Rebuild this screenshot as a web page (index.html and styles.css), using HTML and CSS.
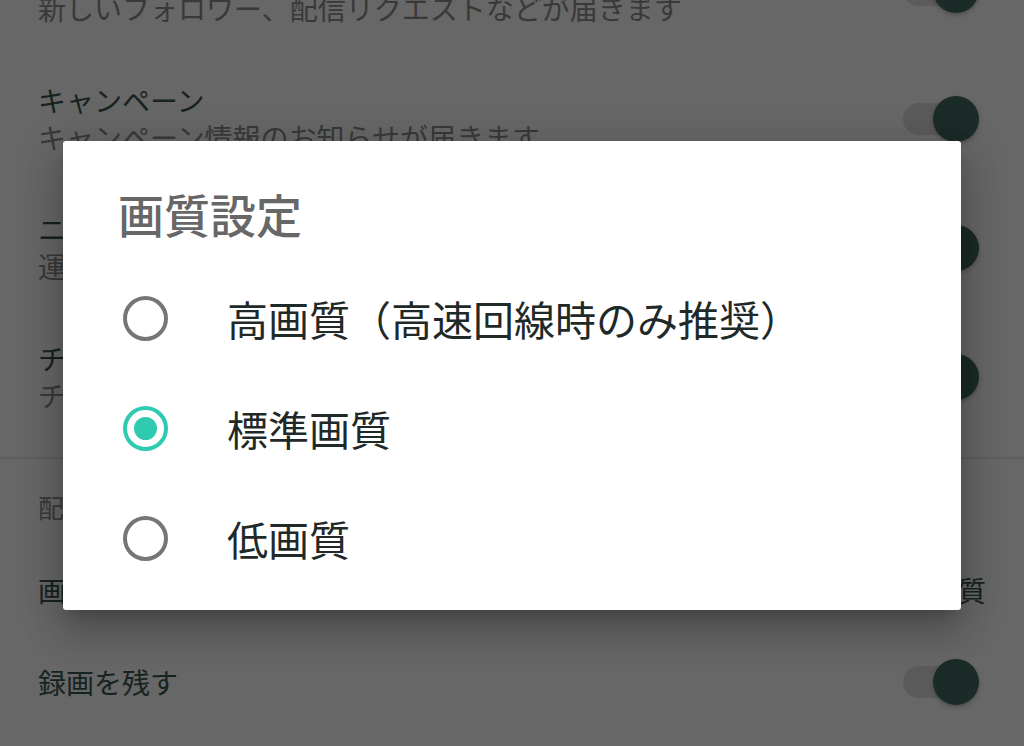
FILE: index.html
```html
<!DOCTYPE html>
<html lang="ja">
<head>
<meta charset="utf-8">
<title>画質設定</title>
<link rel="stylesheet" href="styles.css">
</head>
<body>
<div class="page">
  <div class="list">
    <div class="pref">
      <div class="pref-text">
        <div class="pref-title">フォロー通知</div>
        <div class="pref-sub">新しいフォロワー、配信リクエストなどが届きます</div>
      </div>
      <div class="switch"><span class="track"></span><span class="thumb"></span></div>
    </div>
    <div class="pref">
      <div class="pref-text">
        <div class="pref-title">キャンペーン</div>
        <div class="pref-sub">キャンペーン情報のお知らせが届きます</div>
      </div>
      <div class="switch"><span class="track"></span><span class="thumb"></span></div>
    </div>
    <div class="pref">
      <div class="pref-text">
        <div class="pref-title">ニュース</div>
        <div class="pref-sub">運営からのお知らせが届きます</div>
      </div>
      <div class="switch"><span class="track"></span><span class="thumb"></span></div>
    </div>
    <div class="pref">
      <div class="pref-text">
        <div class="pref-title">チャンネル</div>
        <div class="pref-sub">チャンネルの更新情報が届きます</div>
      </div>
      <div class="switch"><span class="track"></span><span class="thumb"></span></div>
    </div>
  </div>
  <div class="divider"></div>
  <div class="category">配信設定</div>
  <div class="pref pref-single">
    <div class="pref-title">画質</div>
    <div class="pref-value">標準画質</div>
  </div>
  <div class="pref pref-single">
    <div class="pref-title">録画を残す</div>
    <div class="switch"><span class="track"></span><span class="thumb"></span></div>
  </div>
</div>

<div class="scrim">
  <div class="dialog">
    <div class="dialog-title">画質設定</div>
    <div class="options">
      <div class="option">
        <span class="radio"></span>
        <span class="option-label">高画質（高速回線時のみ推奨）</span>
      </div>
      <div class="option">
        <span class="radio radio-checked"></span>
        <span class="option-label">標準画質</span>
      </div>
      <div class="option">
        <span class="radio"></span>
        <span class="option-label">低画質</span>
      </div>
    </div>
  </div>
</div>
</body>
</html>
```

FILE: styles.css
```css
* {
  box-sizing: border-box;
}

html, body {
  margin: 0;
  padding: 0;
  width: 1024px;
  height: 746px;
  overflow: hidden;
}

body {
  background: #666766;
  font-family: "Noto Sans CJK JP", "Noto Sans", sans-serif;
}

.page {
  width: 1024px;
  height: 746px;
  overflow: hidden;
}

.list {
  margin-top: -75px;
}

.pref {
  display: flex;
  align-items: center;
  justify-content: space-between;
  height: 129px;
  padding: 0 38px;
}

.pref-text {
  display: flex;
  flex-direction: column;
}

.pref-title {
  font-size: 28px;
  line-height: 37px;
  color: #17231f;
  white-space: nowrap;
}

.pref-sub {
  font-size: 28px;
  line-height: 37px;
  color: #383938;
  white-space: nowrap;
}

.pref-value {
  font-size: 28px;
  line-height: 37px;
  color: #17231f;
}

.pref-single {
  height: 92px;
}

.switch {
  position: relative;
  width: 76px;
  height: 46px;
  margin-right: 7px;
  flex: none;
}

.track {
  position: absolute;
  left: 0;
  top: 7px;
  width: 64px;
  height: 32px;
  border-radius: 16px;
  background: #5a5b5a;
}

.thumb {
  position: absolute;
  right: 0;
  top: 0;
  width: 46px;
  height: 46px;
  border-radius: 50%;
  background: #1b2b28;
  box-shadow: 0 2px 4px rgba(0, 0, 0, 0.25);
}

.divider {
  margin-top: 16px;
  height: 2px;
  background: #5d5e5d;
}

.category {
  padding: 30px 38px 19px;
  font-size: 26px;
  line-height: 36px;
  color: #3a3b3a;
}

/* dialog */
.scrim {
  position: absolute;
  left: 0;
  top: 0;
  width: 1024px;
  height: 746px;
}

.dialog {
  position: absolute;
  left: 63px;
  top: 141px;
  width: 898px;
  height: 469px;
  background: #ffffff;
  border-radius: 3px;
  padding-top: 42px;
  box-shadow:
    0 11px 15px -7px rgba(0, 0, 0, 0.2),
    0 24px 38px 3px rgba(0, 0, 0, 0.14),
    0 9px 46px 8px rgba(0, 0, 0, 0.12);
}

.dialog-title {
  padding-left: 55px;
  font-size: 46px;
  line-height: 60px;
  font-weight: 500;
  color: #676767;
}

.options {
  margin-top: 20px;
  display: flex;
  flex-direction: column;
}

.option {
  display: flex;
  align-items: center;
  height: 110px;
  padding-left: 59.5px;
  gap: 59.5px;
}

.radio {
  width: 45px;
  height: 45px;
  flex: none;
  border-radius: 50%;
  border: 4.5px solid #767676;
  display: flex;
  align-items: center;
  justify-content: center;
}

.radio-checked {
  border-color: #2ecbb1;
}

.radio-checked::after {
  content: "";
  width: 23px;
  height: 23px;
  border-radius: 50%;
  background: #2ecbb1;
}

.option-label {
  font-size: 41px;
  line-height: 56px;
  color: #1f2a28;
  white-space: nowrap;
}
```
